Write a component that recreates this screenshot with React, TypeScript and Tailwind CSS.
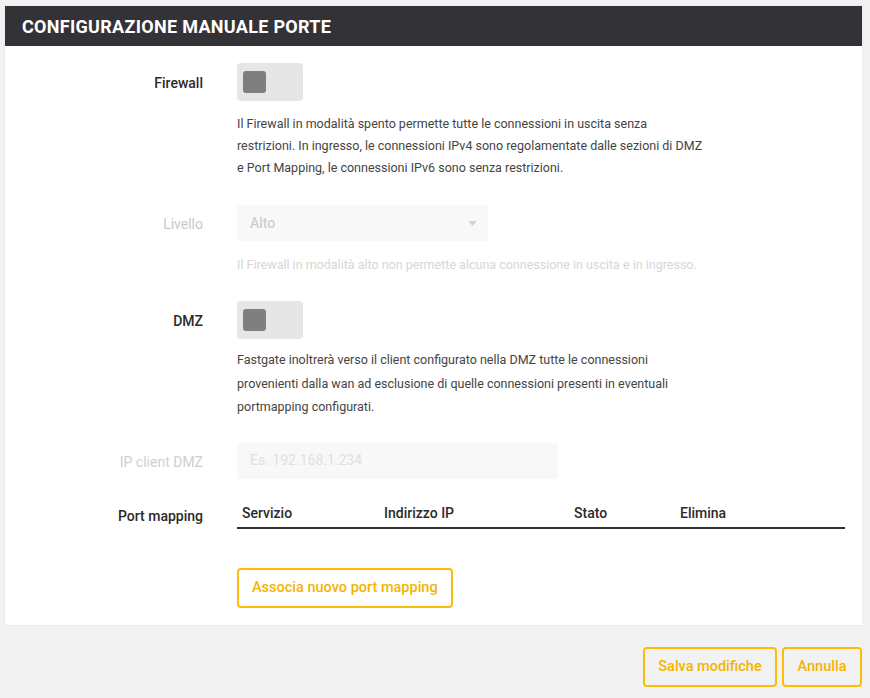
import React from "react";

const Toggle = () => (
  <div className="w-[66px] h-[38px] bg-[#e6e6e6] rounded-[4px] flex items-center pl-[6px]">
    <div className="w-[23px] h-[22px] bg-[#7f7f80] rounded-[3px]" />
  </div>
);

export default function App() {
  return (
    <div
      className="w-[870px] h-[698px] bg-[#f2f2f2] pt-[6px] pl-[5px] text-[#333]"
      style={{ fontFamily: "Roboto, 'Noto Sans', sans-serif" }}
    >
      <div className="w-[857px] h-[619px] bg-white shadow-[0_0_2px_rgba(0,0,0,0.08)]">
        <div className="h-[40px] bg-[#333236] flex items-center pl-[17px]">
          <span className="text-white font-bold text-[18px] tracking-[0.3px]">
            CONFIGURAZIONE MANUALE PORTE
          </span>
        </div>

        <div className="flex flex-col">
          {/* Firewall */}
          <div className="flex mt-[17px]">
            <div className="w-[198px] text-right text-[14px] font-medium pt-[10px] pr-0 text-[#2b2b2b]">Firewall</div>
            <div className="ml-[34px]">
              <Toggle />
            </div>
          </div>
          <div className="ml-[232px] mt-[12px] text-[12.5px] leading-[22px] text-[#444] whitespace-nowrap">
            <div>Il Firewall in modalità spento permette tutte le connessioni in uscita senza</div>
            <div>restrizioni. In ingresso, le connessioni IPv4 sono regolamentate dalle sezioni di DMZ</div>
            <div>e Port Mapping, le connessioni IPv6 sono senza restrizioni.</div>
          </div>

          {/* Livello */}
          <div className="flex mt-[26px]">
            <div className="w-[198px] text-right text-[14px] pt-[9px] text-[#c8c8c8]">Livello</div>
            <div className="ml-[34px] w-[251px] h-[36px] bg-[#f8f8f8] rounded-[3px] flex items-center justify-between pl-[13px] pr-[11px]">
              <span className="text-[14px] text-[#cfcfcf] font-medium">Alto</span>
              <svg width="9" height="5" viewBox="0 0 9 5">
                <path d="M0 0 L9 0 L4.5 5 Z" fill="#d4d4d4" />
              </svg>
            </div>
          </div>
          <div className="ml-[232px] mt-[13px] text-[12.5px] leading-[22px] text-[#d6d6d6] whitespace-nowrap">
            Il Firewall in modalità alto non permette alcuna connessione in uscita e in ingresso.
          </div>

          {/* DMZ */}
          <div className="flex mt-[25px]">
            <div className="w-[198px] text-right text-[14px] font-medium pt-[10px] text-[#2b2b2b]">DMZ</div>
            <div className="ml-[34px]">
              <Toggle />
            </div>
          </div>
          <div className="ml-[232px] mt-[9px] text-[12.5px] leading-[23.5px] text-[#444] whitespace-nowrap">
            <div>Fastgate inoltrerà verso il client configurato nella DMZ tutte le connessioni</div>
            <div>provenienti dalla wan ad esclusione di quelle connessioni presenti in eventuali</div>
            <div>portmapping configurati.</div>
          </div>

          {/* IP client DMZ */}
          <div className="flex mt-[24px]">
            <div className="w-[198px] text-right text-[14px] pt-[9px] text-[#d0d0d0]">IP client DMZ</div>
            <div className="ml-[34px] w-[321px] h-[36px] bg-[#f8f8f8] rounded-[3px] flex items-center pl-[13px]">
              <span className="text-[14px] text-[#e0e0e0]">Es. 192.168.1.234</span>
            </div>
          </div>

          {/* Port mapping */}
          <div className="flex mt-[23px]">
            <div className="w-[198px] text-right text-[14px] font-medium pt-[4px] text-[#2b2b2b]">Port mapping</div>
            <div className="ml-[34px] w-[608px]">
              <div className="flex text-[14px] font-medium text-[#2b2b2b] h-[27px] items-center border-b-2 border-[#333] pb-[1px]">
                <span className="w-[147px] pl-[5px]">Servizio</span>
                <span className="w-[190px]">Indirizzo IP</span>
                <span className="w-[106px]">Stato</span>
                <span>Elimina</span>
              </div>
              <button className="mt-[39px] h-[40px] px-[13px] border-2 border-[#fbbd08] rounded-[4px] text-[#f4b400] text-[14.5px] font-medium">
                Associa nuovo port mapping
              </button>
            </div>
          </div>
        </div>
      </div>

      <div className="flex justify-end gap-[5px] w-[857px] mt-[22px]">
        <button className="w-[134px] h-[40px] border-2 border-[#fbbd08] rounded-[4px] text-[#f4b400] text-[14.5px] font-medium">
          Salva modifiche
        </button>
        <button className="w-[80px] h-[40px] border-2 border-[#fbbd08] rounded-[4px] text-[#f4b400] text-[14.5px] font-medium">
          Annulla
        </button>
      </div>
    </div>
  );
}
